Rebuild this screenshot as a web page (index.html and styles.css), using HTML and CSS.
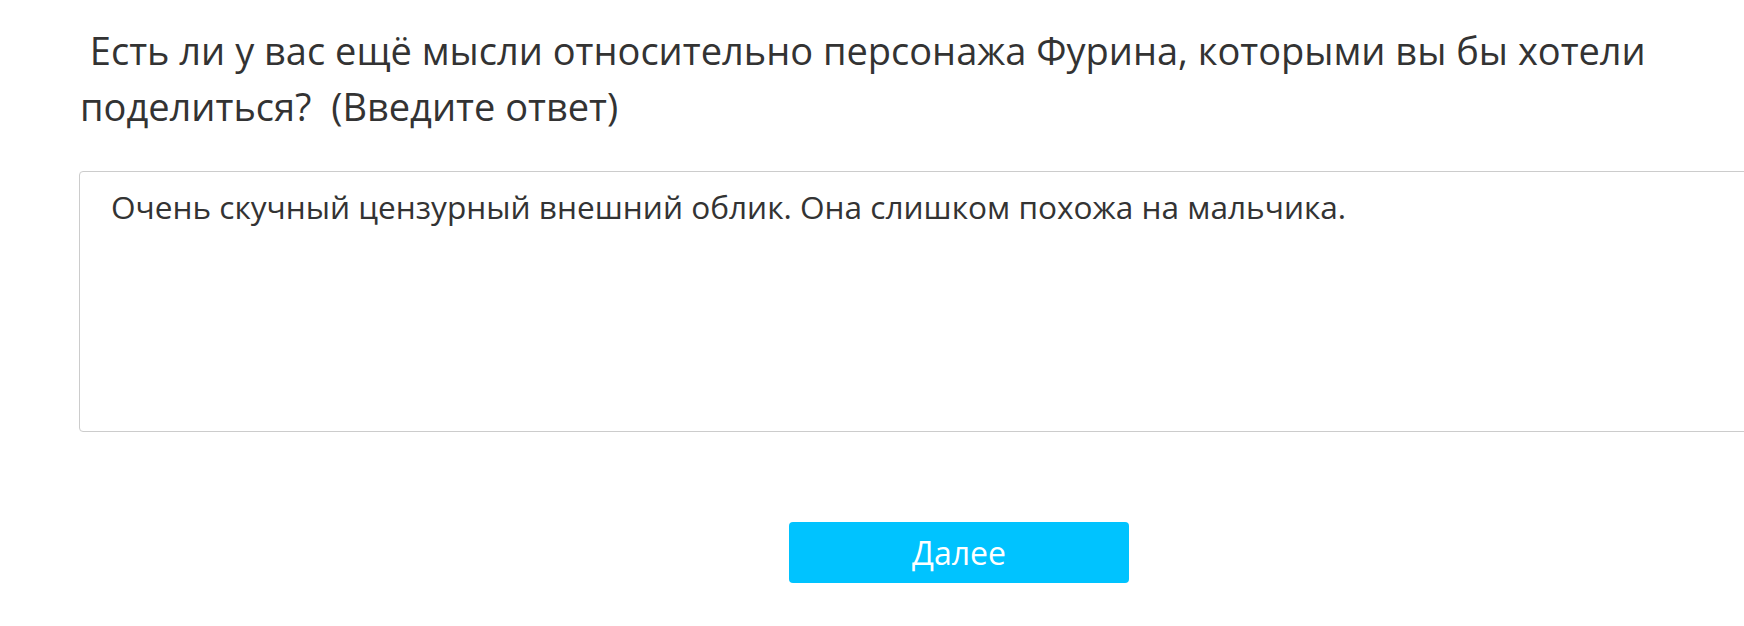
FILE: index.html
```html
<!DOCTYPE html>
<html lang="ru">
<head>
<meta charset="utf-8">
<title>Вопрос</title>
<link rel="stylesheet" href="styles.css">
</head>
<body>
<div class="page">
  <form class="question">
    <div class="title">&nbsp;Есть ли у вас ещё мысли относительно персонажа Фурина, которыми вы бы хотели<br>поделиться?&nbsp; (Введите ответ)</div>
    <textarea class="answer" readonly>Очень скучный цензурный внешний облик. Она слишком похожа на мальчика.</textarea>
    <div class="actions">
      <button type="button" class="next">Далее</button>
    </div>
  </form>
</div>
</body>
</html>
```

FILE: styles.css
```css
html, body {
  margin: 0;
  padding: 0;
  background: #ffffff;
  overflow: hidden;
}
.page {
  padding-left: 79px;
  padding-top: 22px;
}
.question {
  width: 1760px;
  display: flex;
  flex-direction: column;
}
.title {
  font-family: "Open Sans", "Noto Sans", sans-serif;
  font-size: 38px;
  line-height: 56px;
  color: #333333;
  padding-left: 1px;
}
.answer {
  margin-top: 37px;
  box-sizing: border-box;
  width: 100%;
  height: 261px;
  border: 1px solid #cccccc;
  border-radius: 4px;
  padding: 13px 31px;
  font-family: "Open Sans", "Noto Sans", sans-serif;
  font-size: 31.6px;
  line-height: 44px;
  color: #333333;
  resize: none;
  outline: none;
  background: #ffffff;
}
.actions {
  display: flex;
  justify-content: center;
  margin-top: 90px;
}
.next {
  width: 340px;
  height: 61px;
  border: none;
  border-radius: 4px;
  background: #00c3ff;
  color: #ffffff;
  font-family: "Open Sans", "Noto Sans", sans-serif;
  font-size: 32px;
  cursor: pointer;
}
```
